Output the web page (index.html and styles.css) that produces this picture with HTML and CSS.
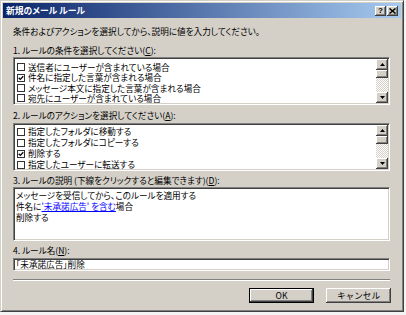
FILE: index.html
```html
<!DOCTYPE html>
<html lang="ja">

<head>
    <meta charset="UTF-8">
    <title>新規のメール ルール</title>
    <link rel="stylesheet" href="styles.css">
</head>

<body>
    <div class="window">
        <div class="titlebar">
            <span class="title">新規のメール ルール</span>
            <span class="tbtns">
                <span class="tbtn help">?</span>
                <span class="tbtn close">
                    <svg width="7" height="6" viewBox="0 0 7 6"><path d="M0.5 0.5 L6.5 5.5 M6.5 0.5 L0.5 5.5" stroke="#000" stroke-width="1.5" /></svg>
                </span>
            </span>
        </div>

        <div class="content">
            <p class="intro">条件およびアクションを選択してから、説明に値を入力してください。</p>

            <p class="label l1">1. ルールの条件を選択してください(<u>C</u>):</p>
            <div class="listbox list1">
                <ul class="items">
                    <li><span class="chk"></span>送信者にユーザーが含まれている場合</li>
                    <li><span class="chk on"><svg width="6" height="6" viewBox="0 0 6 6"><path d="M0.7 2.8 L2.3 4.4 L5.3 1.2" stroke="#000" stroke-width="1.3" fill="none" /></svg></span>件名に指定した言葉が含まれる場合</li>
                    <li><span class="chk"></span>メッセージ本文に指定した言葉が含まれる場合</li>
                    <li><span class="chk"></span>宛先にユーザーが含まれている場合</li>
                </ul>
                <div class="scrollbar">
                    <span class="sbtn"><svg width="5" height="3" viewBox="0 0 5 3"><polygon points="2.5,0 5,3 0,3" /></svg></span>
                    <span class="thumb"></span>
                    <span class="track"></span>
                    <span class="sbtn"><svg width="5" height="3" viewBox="0 0 5 3"><polygon points="0,0 5,0 2.5,3" /></svg></span>
                </div>
            </div>

            <p class="label l2">2. ルールのアクションを選択してください(<u>A</u>):</p>
            <div class="listbox list2">
                <ul class="items">
                    <li><span class="chk"></span>指定したフォルダに移動する</li>
                    <li><span class="chk"></span>指定したフォルダにコピーする</li>
                    <li><span class="chk on"><svg width="6" height="6" viewBox="0 0 6 6"><path d="M0.7 2.8 L2.3 4.4 L5.3 1.2" stroke="#000" stroke-width="1.3" fill="none" /></svg></span>削除する</li>
                    <li><span class="chk"></span>指定したユーザーに転送する</li>
                </ul>
                <div class="scrollbar">
                    <span class="sbtn"><svg width="5" height="3" viewBox="0 0 5 3"><polygon points="2.5,0 5,3 0,3" /></svg></span>
                    <span class="thumb"></span>
                    <span class="track"></span>
                    <span class="sbtn"><svg width="5" height="3" viewBox="0 0 5 3"><polygon points="0,0 5,0 2.5,3" /></svg></span>
                </div>
            </div>

            <p class="label l3">3. ルールの説明 (下線をクリックすると編集できます)(<u>D</u>):</p>
            <div class="desc">
                <div>メッセージを受信してから、このルールを適用する</div>
                <div>件名に<a href="#">'未承諾広告' を含む</a>場合</div>
                <div>削除する</div>
            </div>

            <p class="label l4">4. ルール名(<u>N</u>):</p>
            <div class="namebox">「未承諾広告」削除</div>

            <div class="separator"></div>

            <div class="buttons">
                <button class="btn default">OK</button>
                <button class="btn">キャンセル</button>
            </div>
        </div>
    </div>
</body>

</html>
```

FILE: styles.css
```css
* {
    box-sizing: border-box;
}

body {
    margin: 0;
    background-color: #f4f4f4;
    font-family: "Noto Sans CJK JP", sans-serif;
    font-size: 8.6px;
    font-feature-settings: "palt";
    color: #000;
}

p {
    margin: 0;
}

.window {
    width: 404px;
    height: 312px;
    padding: 2px;
    border: 1px solid;
    border-color: #d4d0c8 #404040 #404040 #d4d0c8;
    background-color: #d4d0c8;
    box-shadow: inset 1px 1px #fff, inset -1px -1px #808080;
    display: flex;
    flex-direction: column;
}

/* title bar */
.titlebar {
    height: 15px;
    padding: 0 3px 0 3px;
    background: linear-gradient(to right, #0a246a, #a6caf0);
    display: flex;
    align-items: center;
    justify-content: space-between;
}

.title {
    color: #fff;
    font-weight: bold;
    font-size: 8.8px;
    line-height: 15px;
}

.tbtns {
    display: flex;
    gap: 1px;
}

.tbtn {
    width: 11px;
    height: 10px;
    background-color: #d4d0c8;
    box-shadow: inset -1px -1px #404040, inset 1px 1px #fff, inset -2px -2px #808080;
    display: flex;
    align-items: center;
    justify-content: center;
}

.help {
    font-family: "Liberation Sans", sans-serif;
    font-weight: bold;
    font-size: 8px;
    line-height: 10px;
}

/* body */
.content {
    flex: 1;
    padding: 0 11px 0 10px;
    display: flex;
    flex-direction: column;
}

.intro,
.label {
    height: 12px;
    line-height: 12px;
    white-space: nowrap;
}

.intro {
    margin-top: 7px;
}

.l1 {
    margin-top: 7px;
}

.l2 {
    margin-top: 4px;
}

.l3,
.l4 {
    margin-top: 3px;
}

.listbox,
.desc,
.namebox {
    background-color: #fff;
    border: 1px solid;
    border-color: #808080 #fff #fff #808080;
    box-shadow: inset 1px 1px #404040, inset -1px -1px #d4d0c8;
    padding: 1px;
}

.listbox {
    height: 48px;
    margin-top: 1px;
    display: flex;
    overflow: hidden;
}

.list2 {
    margin-top: 2px;
}

.items {
    flex: 1;
    margin: 0;
    padding: 3px 0 0 2px;
    list-style: none;
    overflow: hidden;
}

.list2 .items {
    padding-top: 1px;
}

.items li {
    height: 10.4px;
    line-height: 10.4px;
    display: flex;
    align-items: center;
    gap: 3px;
    white-space: nowrap;
}

.list2 .items li {
    height: 11px;
    line-height: 11px;
}

.chk {
    width: 8px;
    height: 8px;
    border: 1px solid #333;
    background-color: #fff;
    display: flex;
    align-items: center;
    justify-content: center;
    flex-shrink: 0;
}

/* scrollbar */
.scrollbar {
    width: 12px;
    display: flex;
    flex-direction: column;
}

.sbtn,
.thumb {
    background-color: #d4d0c8;
    box-shadow: inset -1px -1px #404040, inset 1px 1px #fff, inset -2px -2px #808080;
}

.sbtn {
    height: 11px;
    display: flex;
    align-items: center;
    justify-content: center;
}

.thumb {
    height: 8px;
}

.track {
    flex: 1;
    background: repeating-conic-gradient(#fff 0 25%, #d4d0c8 0 50%) 0 0 / 2px 2px;
}

.desc {
    height: 54px;
    margin-top: 1px;
    padding: 2px 2px;
    line-height: 11px;
}

.desc a {
    color: #0000ff;
}

.namebox {
    height: 13px;
    margin-top: 2px;
    padding: 0 2px;
    line-height: 11px;
}

.separator {
    height: 2px;
    margin-top: 8px;
    border-top: 1px solid #808080;
    border-bottom: 1px solid #fff;
}

.buttons {
    margin-top: 7px;
    margin-right: -1px;
    display: flex;
    justify-content: flex-end;
    gap: 12px;
}

.btn {
    width: 65px;
    height: 15px;
    padding: 0;
    border: none;
    background-color: #d4d0c8;
    font-family: inherit;
    font-size: 8.6px;
    line-height: 15px;
    color: #000;
    box-shadow: inset -1px -1px #404040, inset 1px 1px #fff, inset -2px -2px #808080;
}

.btn.default {
    border: 1px solid #000;
    line-height: 13px;
}
```
